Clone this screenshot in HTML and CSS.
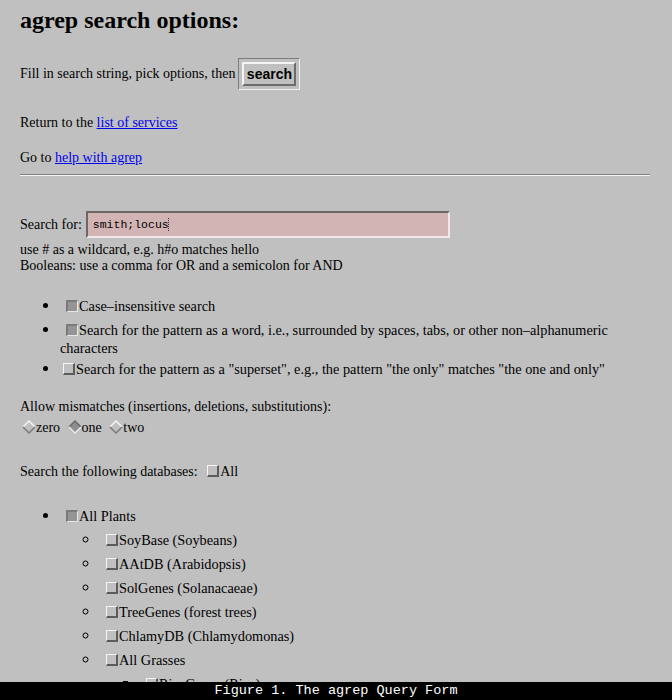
FILE: index.html
```html
<!DOCTYPE html>
<html>
<head>
<meta charset="utf-8">
<title>agrep search options</title>
<link rel="stylesheet" href="styles.css">
</head>
<body>
<div class="page">
  <h1>agrep search options:</h1>
  <div class="fill-row">
    <span>Fill in search string, pick options, then</span>
    <span class="btn-frame"><span class="btn">search</span></span>
  </div>
  <p class="line return">Return to the <a href="#">list of services</a></p>
  <p class="line goto">Go to <a href="#">help with agrep</a></p>
  <div class="rule"></div>
  <div class="search-row">
    <span>Search for:</span>
    <span class="field">smith;locus<span class="caret"></span></span>
  </div>
  <div class="hints">
    <div>use # as a wildcard, e.g. h#o matches hello</div>
    <div>Booleans: use a comma for OR and a semicolon for AND</div>
  </div>
  <ul class="opts">
    <li><span class="cb on"></span>Case–insensitive search</li>
    <li><span class="cb on"></span>Search for the pattern as a word, i.e., surrounded by spaces, tabs, or other non–alphanumeric characters</li>
    <li class="third"><span class="cb tight"></span>Search for the pattern as a "superset", e.g., the pattern "the only" matches "the one and only"</li>
  </ul>
  <div class="mis-label">Allow mismatches (insertions, deletions, substitutions):</div>
  <div class="radios">
    <span class="radio"><svg width="14" height="14" viewBox="0 0 14 14"><polygon points="7,1 13,7 7,13 1,7" fill="#c0c0c0"/><polyline points="1,7 7,1 13,7" fill="none" stroke="#f4f4f4" stroke-width="1.5"/><polyline points="1,7 7,13 13,7" fill="none" stroke="#7a7a7a" stroke-width="1.5"/></svg>zero</span>
    <span class="radio"><svg width="14" height="14" viewBox="0 0 14 14"><polygon points="7,1 13,7 7,13 1,7" fill="#8e8e8e"/><polyline points="1,7 7,1 13,7" fill="none" stroke="#6a6a6a" stroke-width="1.5"/><polyline points="1,7 7,13 13,7" fill="none" stroke="#e8e8e8" stroke-width="1.5"/></svg>one</span>
    <span class="radio"><svg width="14" height="14" viewBox="0 0 14 14"><polygon points="7,1 13,7 7,13 1,7" fill="#c0c0c0"/><polyline points="1,7 7,1 13,7" fill="none" stroke="#f4f4f4" stroke-width="1.5"/><polyline points="1,7 7,13 13,7" fill="none" stroke="#7a7a7a" stroke-width="1.5"/></svg>two</span>
  </div>
  <div class="db-label">Search the following databases: <span class="cb"></span>All</div>
  <ul class="dbs">
    <li><span class="cb on"></span>All Plants
      <ul>
        <li><span class="cb"></span>SoyBase (Soybeans)</li>
        <li><span class="cb"></span>AAtDB (Arabidopsis)</li>
        <li><span class="cb"></span>SolGenes (Solanacaeae)</li>
        <li><span class="cb"></span>TreeGenes (forest trees)</li>
        <li><span class="cb"></span>ChlamyDB (Chlamydomonas)</li>
        <li><span class="cb"></span>All Grasses
          <ul>
            <li><span class="cb"></span>RiceGenes (Rice)</li>
            <li><span class="cb"></span>MaizeDB (Maize)</li>
          </ul>
        </li>
      </ul>
    </li>
  </ul>
</div>
<div class="caption">Figure 1. The agrep Query Form</div>
</body>
</html>
```
FILE: styles.css
```css
html, body {
  margin: 0;
  padding: 0;
  background: #c0c0c0;
}
body {
  font-family: "Liberation Serif", "Times New Roman", serif;
  font-size: 14px;
  line-height: 16px;
  color: #000;
}
.page {
  padding: 0 22px 40px 20px;
}
h1 {
  font-family: "Liberation Serif", serif;
  font-weight: bold;
  font-size: 24px;
  line-height: 28px;
  margin: 6px 0 0;
}
a {
  color: #0000ee;
  text-decoration: underline;
}
.fill-row {
  margin-top: 24px;
  height: 32px;
  display: flex;
  align-items: center;
  gap: 3px;
}
.btn-frame {
  display: inline-block;
  box-sizing: border-box;
  height: 32px;
  width: 62px;
  border: 1px solid;
  border-color: #7c7c7c #f2f2f2 #f2f2f2 #7c7c7c;
  padding: 3px;
}
.btn {
  display: flex;
  align-items: center;
  justify-content: center;
  box-sizing: border-box;
  height: 24px;
  border: 2px solid;
  border-color: #f4f4f4 #6c6c6c #6c6c6c #f4f4f4;
  font-family: "Liberation Sans", Arial, sans-serif;
  font-weight: bold;
  font-size: 14px;
}
.line {
  margin: 0;
}
.return {
  margin-top: 25px;
}
.goto {
  margin-top: 19px;
}
.rule {
  margin-top: 8px;
  border-top: 1px solid #808080;
  border-bottom: 1px solid #f4f4f4;
}
.search-row {
  margin-top: 35px;
  display: flex;
  align-items: center;
  gap: 4px;
  height: 27px;
}
.field {
  box-sizing: border-box;
  width: 364px;
  height: 27px;
  display: flex;
  align-items: center;
  padding-left: 5px;
  background: #d3b4b4;
  border: 2px solid;
  border-color: #6e6666 #f2e8e8 #f2e8e8 #6e6666;
  font-family: "Liberation Mono", "Courier New", monospace;
  font-size: 11.5px;
}
.caret {
  display: inline-block;
  width: 1px;
  height: 13px;
  border-left: 1px dotted #333;
  margin-left: -1px;
}
.hints {
  margin-top: 4px;
}
ul {
  margin: 0;
  padding-left: 40px;
}
.opts {
  margin-top: 23px;
}
li {
  line-height: 18px;
  margin-top: 6px;
  font-size: 14.3px;
}
li::marker {
  font-size: 17px;
}
.opts li:first-child,
.dbs > li {
  margin-top: 0;
}
.opts li.third {
  margin-top: 3px;
}
.cb {
  display: inline-block;
  box-sizing: border-box;
  width: 12px;
  height: 12px;
  margin-left: 6px;
  margin-right: 1px;
  vertical-align: -1px;
  border: 1px solid;
  border-color: #f4f4f4 #5c5c5c #5c5c5c #f4f4f4;
  border-right-width: 2px;
  border-bottom-width: 2px;
  background: #c0c0c0;
}
.cb.on {
  background: #959595;
  border-color: #7a7a7a #e8e8e8 #e8e8e8 #7a7a7a;
  border-width: 2px 1px 1px 2px;
}
.cb.tight {
  margin-left: 3px;
}
.mis-label {
  margin-top: 21px;
}
.radios {
  margin-top: 4px;
  line-height: 18px;
  margin-left: 2px;
}
.radio {
  margin-right: 4px;
}
.radio svg {
  vertical-align: -2px;
}
.db-label {
  margin-top: 27px;
}
.db-label .cb {
  margin-left: 6px;
}
.dbs {
  margin-top: 27px;
}
.dbs ul {
  list-style-type: circle;
}
.dbs ul ul {
  list-style-type: square;
}
.caption {
  position: fixed;
  left: 0;
  right: 0;
  bottom: 0;
  height: 18px;
  background: #000;
  color: #fff;
  text-align: center;
  font-family: "Liberation Mono", "Courier New", monospace;
  font-size: 13.5px;
  line-height: 18px;
}
```
